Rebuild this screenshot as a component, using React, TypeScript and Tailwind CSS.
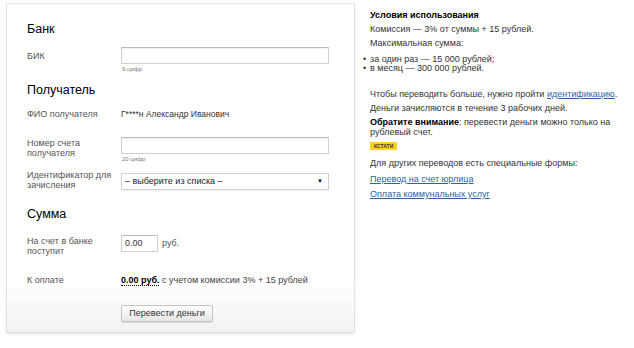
import React from "react";

const font = { fontFamily: '"Liberation Sans", Arial, sans-serif' };

function Row({ label, children, className = "" }: { label: React.ReactNode; children: React.ReactNode; className?: string }) {
  return (
    <div className={`flex ${className}`}>
      <div className="w-[94px] shrink-0 text-[9px] leading-[10px] text-[#555]">{label}</div>
      <div className="flex-1">{children}</div>
    </div>
  );
}

function TextInput({ w = "w-[208px]" }: { w?: string }) {
  return (
    <div className={`${w} h-[17px] border border-[#cfcfcf] border-t-[#b9b9b9] bg-white shadow-[inset_0_1px_1px_rgba(0,0,0,0.06)]`} />
  );
}

export default function App() {
  return (
    <div className="flex w-[634px] h-[348px] bg-white text-[#333]" style={font}>
      <div className="ml-[6px] mt-[3px] w-[349px] h-[330px] border border-[#e2e2e2] rounded-[2px] shadow-[0_1px_2px_rgba(0,0,0,0.12)] bg-gradient-to-b from-white from-[85%] to-[#f2f2f2] pl-[20px] pr-[25px] pt-[17px]">
        <div className="text-[12.5px] leading-[16px] text-black">Банк</div>
        <Row label={<div className="pt-[4px]">БИК</div>} className="mt-[10px]">
          <TextInput />
          <div className="text-[6px] leading-[8px] text-[#777] mt-[1px] ml-[1px]">9 цифр</div>
        </Row>
        <div className="text-[12.5px] leading-[16px] text-black mt-[9px]">Получатель</div>
        <Row label="ФИО получателя" className="mt-[11px]">
          <div className="text-[8.5px] leading-[10px] text-[#333]">Г****н Александр Иванович</div>
        </Row>
        <Row label={<div className="pt-[1px]">Номер счета<br />получателя</div>} className="mt-[18px]">
          <TextInput />
          <div className="text-[6px] leading-[8px] text-[#777] mt-[1px] ml-[1px]">20 цифр</div>
        </Row>
        <Row label={<div className="-mt-[3px]">Идентификатор для<br />зачисления</div>} className="mt-[10px]">
          <div className="w-[208px] h-[17px] border border-[#cfcfcf] bg-white flex items-center justify-between pl-[3px] pr-[5px] shadow-[0_1px_1px_rgba(0,0,0,0.05)]">
            <span className="text-[9px] text-[#222]">– выберите из списка –</span>
            <span className="text-[6px] text-black">▼</span>
          </div>
        </Row>
        <div className="text-[12.5px] leading-[16px] text-black mt-[16px]">Сумма</div>
        <Row label={<div className="pt-[1px]">На счет в банке<br />поступит</div>} className="mt-[13px]">
          <div className="flex items-center">
            <div className="w-[37px] h-[17px] border border-[#cfcfcf] border-t-[#b9b9b9] bg-white flex items-center pl-[3px] text-[9px] text-[#333]">0.00</div>
            <span className="ml-[4px] text-[9px] text-[#555]">руб.</span>
          </div>
        </Row>
        <Row label="К оплате" className="mt-[19px]">
          <div className="text-[9px] leading-[10px] text-[#444]">
            <span className="font-bold text-black border-b border-dotted border-black">0.00 руб.</span> с учетом комиссии 3% + 15 рублей
          </div>
        </Row>
        <div className="flex mt-[20px]">
          <div className="w-[94px] shrink-0" />
          <div className="h-[17px] w-[92px] border border-[#c4c4c4] rounded-[2px] bg-gradient-to-b from-white to-[#e6e6e6] flex items-center justify-center text-[9px] text-[#333] shadow-[0_1px_1px_rgba(0,0,0,0.1)]">Перевести деньги</div>
        </div>
      </div>

      <div className="ml-[15px] mt-[10px] w-[248px] text-[9px] leading-[10px] text-[#333]">
        <div className="font-bold text-black">Условия использования</div>
        <div className="mt-[4px]">Комиссия — 3% от суммы + 15 рублей.</div>
        <div className="mt-[4px]">Максимальная сумма:</div>
        <ul className="mt-[7px] leading-[9px]">
          <li className="flex -ml-[7px]"><span className="w-[7px]">•</span>за один раз — 15 000 рублей;</li>
          <li className="flex -ml-[7px]"><span className="w-[7px]">•</span>в месяц — 300 000 рублей.</li>
        </ul>
        <div className="mt-[16px]">Чтобы переводить больше, нужно пройти <span className="text-[#2a64a6] underline">идентификацию</span>.</div>
        <div className="mt-[4px]">Деньги зачисляются в течение 3 рабочих дней.</div>
        <div className="mt-[4px]"><b className="text-black">Обратите внимание</b>: перевести деньги можно только на рублевый счет.</div>
        <div className="mt-[3px]"><span className="inline-block bg-[#ffd21f] px-[4px] text-[5px] leading-[8px] font-bold text-[#333]">КСТАТИ</span></div>
        <div className="mt-[8px]">Для других переводов есть специальные формы:</div>
        <div className="mt-[6px] text-[#2a64a6] underline">Перевод на счет юрлица</div>
        <div className="mt-[5px] text-[#2a64a6] underline">Оплата коммунальных услуг</div>
      </div>
    </div>
  );
}
